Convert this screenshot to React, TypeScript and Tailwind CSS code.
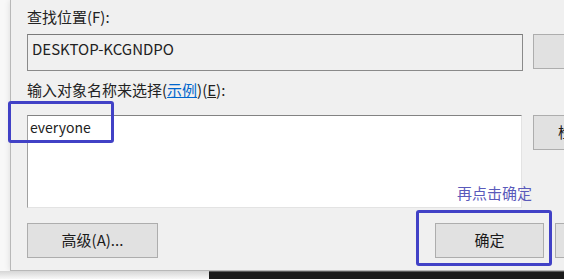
const font = "font-['Noto_Sans_CJK_SC','Noto_Sans',sans-serif]";

function WinButton({ label, className }: { label?: string; className: string }) {
  return (
    <div
      className={`flex h-[35px] shrink-0 items-center border border-[#adadad] bg-[#e1e1e1] text-[15px] text-[#1a1a1a] ${className}`}
    >
      {label}
    </div>
  );
}

export default function App() {
  return (
    <div className={`relative flex h-[279px] w-[564px] flex-col overflow-hidden bg-[#f8f8f8] ${font}`}>
      <div className="ml-[10px] flex h-[271px] w-[600px] shrink-0 flex-col border-b border-l border-[#b8b8b8] bg-[#f0f0f0] pl-[16px] shadow-[0_0_6px_rgba(0,0,0,0.12)]">
        <div className="pt-[7px] text-[15px] leading-[20px] text-[#222]">查找位置(F):</div>

        <div className="mt-[7px] flex">
          <div className="h-[37px] w-[496px] border border-[#8a8a8a] border-t-[#7a7a7a] bg-[#f0f0f0] pl-[4px] pt-[4px] text-[15px] leading-[20px] text-[#222]">
            DESKTOP-KCGNDPO
          </div>
          <WinButton className="ml-[10px] w-[75px]" />
        </div>

        <div className="mt-[9px] text-[15px] leading-[20px] text-[#222]">
          输入对象名称来选择(
          <span className="text-[#0066cc] underline">示例</span>)(<span className="underline">E</span>):
        </div>

        <div className="mt-[15px] flex">
          <div className="h-[93px] w-[495px] border border-[#e3e3e3] border-l-[#a0a0a0] border-t-[#828282] bg-white pl-[2px] pt-[2px] text-[14px] leading-[18px] text-[#222]">
            everyone
          </div>
          <WinButton label="检查名称(C)" className="ml-[11px] w-[75px] whitespace-nowrap pl-[24px]" />
        </div>

        <div className="mt-[15px] flex">
          <WinButton label="高级(A)..." className="w-[131px] justify-center" />
          <WinButton label="确定" className="ml-[277px] w-[109px] justify-center" />
          <WinButton className="ml-[11px] w-[75px]" />
        </div>
      </div>

      <div className="flex flex-1">
        <div className="w-[209px] bg-gradient-to-b from-[#d6d6d6] to-[#f8f8f8]" />
        <div className="flex-1 border-t border-[#5a5a5a] bg-[#1b1b1b]" />
      </div>

      <div className="absolute left-[8px] top-[101px] h-[42px] w-[106px] rounded-[3px] border-[3px] border-[#4141c6]" />
      <div className="absolute left-[416px] top-[210px] h-[56px] w-[136px] rounded-[3px] border-[3px] border-[#4141c6]" />
      <div className="absolute left-[457px] top-[183px] text-[15px] leading-[20px] text-[#5a5abb]">再点击确定</div>
    </div>
  );
}
